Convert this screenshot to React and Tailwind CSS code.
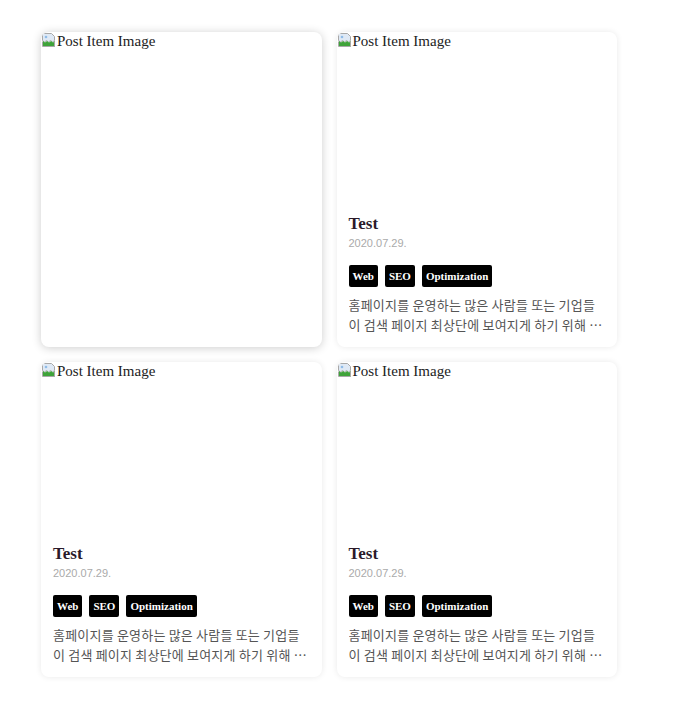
import React from "react";

function BrokenIcon() {
  return (
    <svg width="16" height="16" viewBox="0 0 16 16" className="shrink-0">
      <path d="M1.5 1.5h9l3 3v4l-2 1.5-2-1.5-2 1.5-2-1.5-2 1.5-2-1.5z" fill="#dfe9f5" stroke="#a8a8a8" />
      <path d="M2 9l2 1.5 2-1.5 2 1.5 2-1.5 2 1.5 2-1.5v5.5H2z" fill="#3fa33a" />
      <path d="M1.5 9.5v5h12v-5" fill="none" stroke="#a8a8a8" />
      <circle cx="5" cy="5" r="1.3" fill="#8fbce8" />
    </svg>
  );
}

function ImageAlt() {
  return (
    <div className="flex items-start text-[15px] leading-[19px] text-[#222]" style={{ fontFamily: '"Liberation Serif", serif' }}>
      <BrokenIcon />
      <span>Post Item Image</span>
    </div>
  );
}

function Tag({ children }) {
  return (
    <span
      className="bg-black text-white text-[11px] font-bold leading-[22px] h-[22px] px-[4px] rounded-[2px]"
      style={{ fontFamily: '"Liberation Serif", serif' }}
    >
      {children}
    </span>
  );
}

function Card({ hovered }) {
  return (
    <div
      className={
        "h-[315px] flex flex-col bg-white rounded-[8px] overflow-hidden " +
        (hovered ? "shadow-[0_1px_10px_rgba(0,0,0,0.2)]" : "shadow-[0_0_6px_rgba(0,0,0,0.09)]")
      }
    >
      <div className="flex-1 min-h-0">
        <ImageAlt />
      </div>
      {!hovered && (
        <div className="px-[12px] pb-[12px]">
          <div
            className="text-[17px] font-bold leading-[22px] text-[#2a1a2a]"
            style={{ fontFamily: '"Liberation Serif", serif' }}
          >
            Test
          </div>
          <div
            className="text-[11px] leading-[14px] text-[#aaa] mt-[1px]"
            style={{ fontFamily: '"Liberation Sans", sans-serif' }}
          >
            2020.07.29.
          </div>
          <div className="flex gap-[7px] mt-[15px]">
            <Tag>Web</Tag>
            <Tag>SEO</Tag>
            <Tag>Optimization</Tag>
          </div>
          <p
            className="mt-[8px] text-[13px] leading-[20px] tracking-[0.2px] text-[#555] line-clamp-2"
            style={{ fontFamily: '"Noto Sans CJK KR", sans-serif' }}
          >
            홈페이지를 운영하는 많은 사람들 또는 기업들이 검색 페이지 최상단에 보여지게 하기 위해 많은 노력을 기울이고 있습니다. 이를 검색 엔진 최적화라고 합니다.
          </p>
        </div>
      )}
    </div>
  );
}

export default function App() {
  return (
    <div className="min-h-[707px] bg-white pl-[41px] pt-[32px]">
      <div className="grid w-[576px] grid-cols-2 gap-[15px]">
        <Card hovered />
        <Card />
        <Card />
        <Card />
      </div>
    </div>
  );
}
